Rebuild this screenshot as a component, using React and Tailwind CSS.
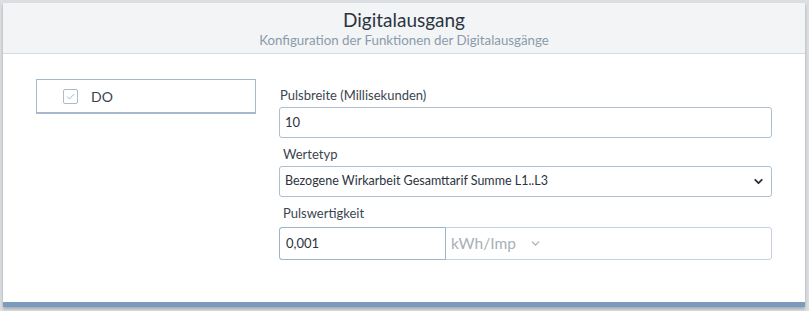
import { ChevronDown } from "lucide-react";

const font = { fontFamily: "Lato, 'Liberation Sans', sans-serif" };

const App = () => {
  return (
    <div className="w-[809px] h-[311px] bg-[#dcdfe2] pt-[3px] px-[3px]" style={font}>
      <div className="w-[802px] bg-white shadow-[0_2px_3px_rgba(0,0,0,0.25)]">
        <div className="h-[51px] bg-[#f3f4f6] border-b border-[#d5dbe1] flex flex-col items-center pt-[5px]">
          <h1 className="text-[19px] leading-[23px] text-[#2b3440]">Digitalausgang</h1>
          <p className="text-[13.3px] leading-[18px] text-[#8a9bab]">Konfiguration der Funktionen der Digitalausgänge</p>
        </div>
        <div className="flex h-[248px] pt-[25px]">
          <div className="w-[276px] pl-[33px]">
            <div className="w-[220px] h-[35px] border border-b-2 border-[#a5b8cc] flex items-center pl-[26px] gap-[13px]">
              <span className="w-[15px] h-[15px] border border-[#a9bbcd] rounded-[2px] flex items-center justify-center">
                <svg width="9" height="7" viewBox="0 0 9 7" fill="none">
                  <path d="M1 3.5 L3.5 6 L8 1" stroke="#a9bbcd" strokeWidth="1" />
                </svg>
              </span>
              <span className="text-[14px] text-[#3a4450]">DO</span>
            </div>
          </div>
          <div className="w-[493px] pt-[7px]">
            <label className="block text-[13px] leading-[18px] text-[#3a4550] pl-[1px]">Pulsbreite (Millisekunden)</label>
            <div className="mt-[3px] h-[31px] border border-[#aebfd0] rounded-[3px] flex items-center px-[5px] text-[13px] text-[#2b3440]">10</div>
            <label className="block mt-[7px] text-[13px] leading-[18px] text-[#3a4550] pl-[4px]">Wertetyp</label>
            <div className="mt-[3px] h-[31px] border border-[#aebfd0] rounded-[3px] flex items-center justify-between px-[5px] text-[12.5px] text-[#2b3440]">
              <span>Bezogene Wirkarbeit Gesamttarif Summe L1..L3</span>
              <ChevronDown size={13} strokeWidth={3.5} className="text-[#2b3440] mr-[1px]" />
            </div>
            <label className="block mt-[7px] text-[13px] leading-[18px] text-[#3a4550] pl-[4px]">Pulswertigkeit</label>
            <div className="mt-[5px] h-[33px] border border-[#c5d1dd] rounded-[3px] flex">
              <div className="w-[167px] -m-px h-[33px] border border-[#9fb5cc] rounded-l-[3px] flex items-center px-[6px] text-[13px] text-[#2b3440]">0,001</div>
              <div className="flex items-center pl-[6px] gap-[13px] text-[15.5px] text-[#a8b0b8]">
                <span>kWh/Imp</span>
                <ChevronDown size={13} strokeWidth={2.5} className="text-[#a8b0b8]" />
              </div>
            </div>
          </div>
        </div>
        <div className="h-[5px] bg-[#7a9bbf]" />
      </div>
    </div>
  );
};

export default App;
